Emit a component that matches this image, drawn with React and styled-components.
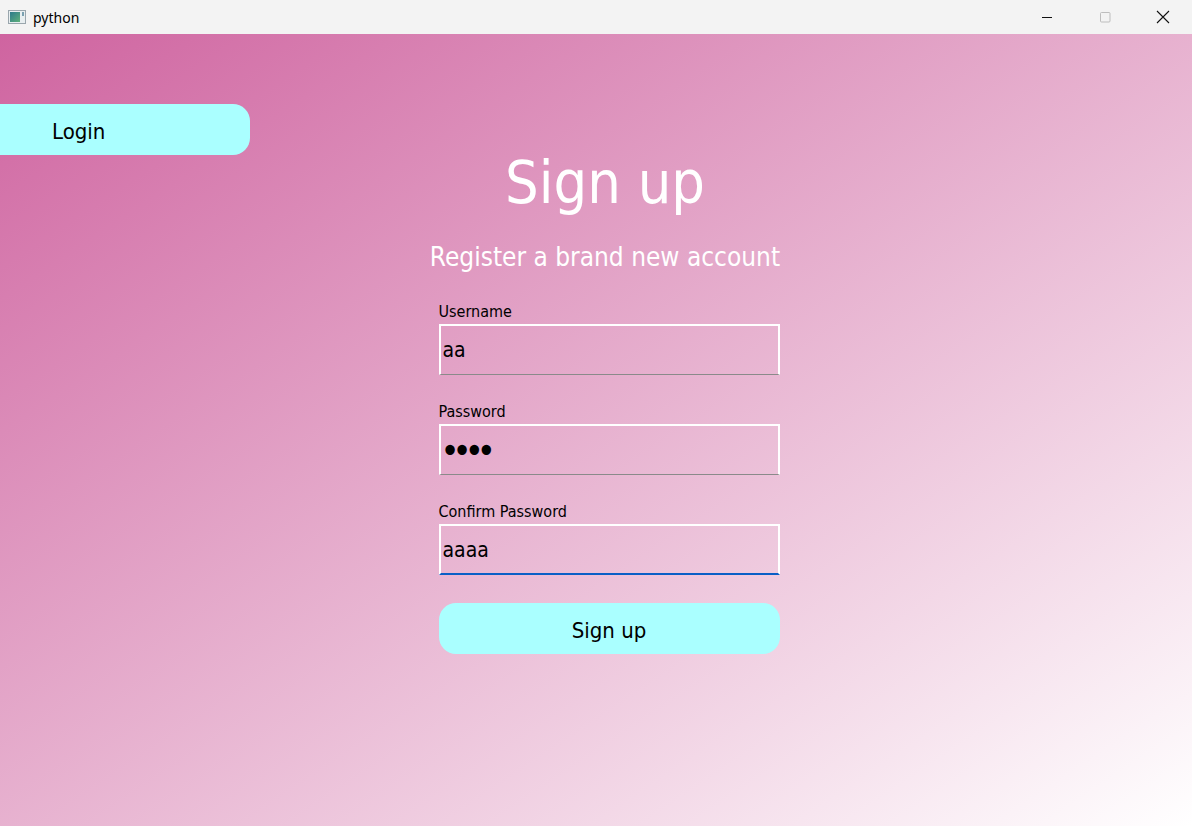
import React from "react";
import styled, { createGlobalStyle } from "styled-components";

const GlobalStyle = createGlobalStyle`
	html, body {
		margin: 0;
		padding: 0;
		width: 1192px;
		height: 826px;
		overflow: hidden;
	}
	body {
		font-family: "DejaVu Sans Condensed", "DejaVu Sans", sans-serif;
	}
`;

const Window = styled.div`
	width: 1192px;
	height: 826px;
	display: flex;
	flex-direction: column;
`;

const TitleBar = styled.div`
	height: 34px;
	flex: none;
	display: flex;
	align-items: center;
	background: #f3f3f3;
	padding-left: 8px;
	font-family: "Noto Sans", "DejaVu Sans", sans-serif;
	font-size: 14px;
	color: #000;
	span {
		margin-left: 7px;
		flex: 1;
	}
`;

const Controls = styled.div`
	display: flex;
	height: 100%;
`;

const ControlBtn = styled.div`
	width: 58px;
	height: 100%;
	display: flex;
	align-items: center;
	justify-content: center;
`;

const Main = styled.div`
	flex: 1;
	display: flex;
	flex-direction: column;
	align-items: flex-start;
	background: linear-gradient(to bottom right, #cf64a0 0%, #ffffff 100%);
`;

const PillButton = styled.button`
	background: #aaffff;
	border: none;
	color: #000;
	font-family: inherit;
	font-size: 22px;
	height: 51px;
	padding: 3px 0 0;
	cursor: pointer;
`;

const LoginButton = styled(PillButton)`
	margin-top: 70px;
	width: 250px;
	border-radius: 0 17px 17px 0;
	text-align: left;
	padding-left: 52px;
`;

const Content = styled.div`
	margin-left: 404px;
	width: 402px;
	display: flex;
	flex-direction: column;
	align-items: center;
`;

const Title = styled.h1`
	margin: -17px 0 0;
	font-weight: normal;
	font-size: 59px;
	line-height: 90px;
	color: #fff;
`;

const Subtitle = styled.h2`
	margin: 9px 0 0;
	font-weight: normal;
	font-size: 26px;
	line-height: 40px;
	color: #fff;
`;

const Form = styled.form`
	margin-top: 23px;
	margin-left: 8px;
	width: 341px;
	display: flex;
	flex-direction: column;
`;

const Field = styled.div`
	display: flex;
	flex-direction: column;
	margin-bottom: 25px;
`;

const Label = styled.label`
	font-size: 16px;
	line-height: 24px;
	color: #000;
`;

const Input = styled.input`
	box-sizing: border-box;
	height: 51px;
	width: 341px;
	background: transparent;
	border: 2px solid #ffffff;
	border-bottom: ${(p) => (p.$focused ? "2px solid #0a5fc6" : "1px solid #8a8a8a")};
	padding: 0 0 0 2px;
	font-family: inherit;
	font-size: 21px;
	color: #000;
	outline: none;
	caret-color: #1e5a3c;
	&[type="password"] {
		font-size: 36px;
		letter-spacing: -7px;
		padding-left: 0;
	}
`;

const SubmitButton = styled(PillButton)`
	margin-top: 3px;
	width: 341px;
	border-radius: 17px;
`;

const AppIcon = () => (
	<svg width="18" height="14" viewBox="0 0 18 14">
		<rect x="0.5" y="0.5" width="17" height="13" fill="#e8eef0" stroke="#9aa6ad" />
		<defs>
			<linearGradient id="ic" x1="0" y1="0" x2="1" y2="1">
				<stop offset="0" stopColor="#2d7a8c" />
				<stop offset="1" stopColor="#5fb07a" />
			</linearGradient>
		</defs>
		<rect x="2" y="2" width="10" height="10" fill="url(#ic)" />
		<rect x="14" y="2" width="2" height="4" fill="#7aa0b0" />
	</svg>
);

const App = () => {
	return (
		<Window>
			<GlobalStyle />
			<TitleBar>
				<AppIcon />
				<span>python</span>
				<Controls>
					<ControlBtn>
						<svg width="12" height="12" viewBox="0 0 12 12">
							<line x1="1" y1="6.5" x2="11" y2="6.5" stroke="#111" strokeWidth="1" />
						</svg>
					</ControlBtn>
					<ControlBtn>
						<svg width="12" height="12" viewBox="0 0 12 12">
							<rect x="1.5" y="1.5" width="9.5" height="9.5" rx="1" fill="none" stroke="#bdbdbd" strokeWidth="1" />
						</svg>
					</ControlBtn>
					<ControlBtn>
						<svg width="14" height="14" viewBox="0 0 14 14">
							<path d="M1 1 L13 13 M13 1 L1 13" stroke="#111" strokeWidth="1.1" />
						</svg>
					</ControlBtn>
				</Controls>
			</TitleBar>
			<Main>
				<LoginButton type="button">Login</LoginButton>
				<Content>
					<Title>Sign up</Title>
					<Subtitle>Register a brand new account</Subtitle>
					<Form onSubmit={(e) => e.preventDefault()}>
						<Field>
							<Label htmlFor="username">Username</Label>
							<Input id="username" type="text" defaultValue="aa" />
						</Field>
						<Field>
							<Label htmlFor="password">Password</Label>
							<Input id="password" type="password" defaultValue="aaaa" />
						</Field>
						<Field>
							<Label htmlFor="confirm">Confirm Password</Label>
							<Input id="confirm" type="text" defaultValue="aaaa" $focused />
						</Field>
						<SubmitButton type="submit">Sign up</SubmitButton>
					</Form>
				</Content>
			</Main>
		</Window>
	);
};

export default App;
